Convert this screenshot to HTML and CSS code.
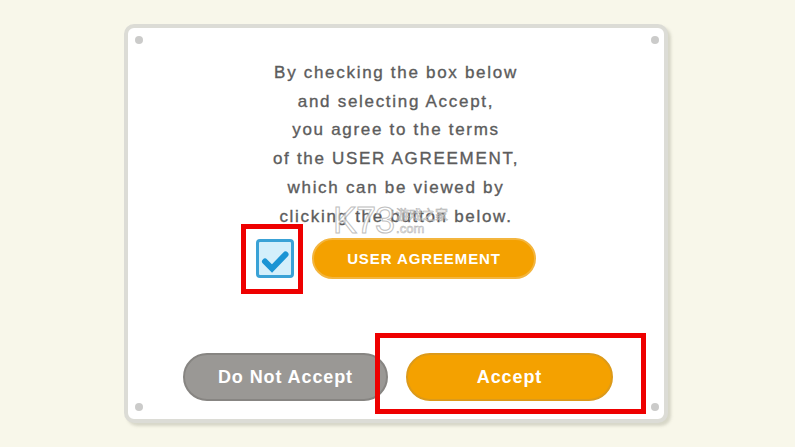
FILE: index.html
```html
<!DOCTYPE html>
<html lang="en">
<head>
<meta charset="utf-8">
<title>User Agreement</title>
<link rel="stylesheet" href="styles.css">
</head>
<body>
<div class="card">
  <span class="dot dot-tl"></span>
  <span class="dot dot-tr"></span>
  <span class="dot dot-bl"></span>
  <span class="dot dot-br"></span>
  <p class="message">
    By checking the box below<br>
    and selecting Accept,<br>
    you agree to the terms<br>
    of the USER AGREEMENT,<br>
    which can be viewed by<br>
    clicking the button below.
  </p>
  <div class="agree-row">
    <div class="checkbox">
      <svg viewBox="0 0 32 32" width="32" height="32" aria-hidden="true">
        <path d="M6 17.5 L13 24.5 L26.5 10.5" fill="none" stroke="#1a94d4" stroke-width="6" stroke-linecap="round" stroke-linejoin="miter"/>
      </svg>
    </div>
    <button class="btn btn-orange btn-agreement">USER AGREEMENT</button>
  </div>
  <div class="actions">
    <button class="btn btn-gray btn-big">Do Not Accept</button>
    <button class="btn btn-orange btn-big btn-accept">Accept</button>
  </div>
</div>
<div class="watermark" aria-hidden="true">
  <span class="wm-k">K73</span>
  <span class="wm-side"><span class="wm-cn">游戏之家</span><span class="wm-com">.com</span></span>
</div>
<div class="mark mark-check"></div>
<div class="mark mark-accept"></div>
</body>
</html>
```
FILE: styles.css
```css
* { box-sizing: border-box; }
html, body { margin: 0; height: 100%; }
body {
  background: #f8f7ea;
  font-family: "Liberation Sans", Arial, sans-serif;
  padding: 24px 0 0 124px;
  position: relative;
  overflow: hidden;
}
.card {
  position: relative;
  width: 544px;
  height: 399px;
  background: #ffffff;
  border: 4px solid #dcdcd6;
  border-radius: 10px;
  box-shadow: 3px 3px 3px rgba(120, 120, 100, 0.25);
  display: flex;
  flex-direction: column;
  align-items: center;
  padding: 31px 0 18px;
}
.dot {
  position: absolute;
  width: 8px;
  height: 8px;
  border-radius: 50%;
  background: #cbcbca;
}
.dot-tl { left: 7px; top: 8px; }
.dot-tr { right: 5px; top: 8px; }
.dot-bl { left: 7px; bottom: 8px; }
.dot-br { right: 5px; bottom: 8px; }

.message {
  margin: 0;
  text-align: center;
  color: #5c5c5c;
  font-size: 17px;
  line-height: 28.7px;
  letter-spacing: 1.7px;
  -webkit-text-stroke: 0.35px #5c5c5c;
}
.agree-row {
  display: flex;
  align-items: center;
  gap: 18px;
  margin-top: 7px;
}
.checkbox {
  width: 38px;
  height: 39px;
  border: 3px solid #3aa2d6;
  border-radius: 4px;
  background: #d4effb;
  display: flex;
  align-items: center;
  justify-content: center;
  padding-top: 3px;
}
.btn {
  font-family: "Liberation Sans", Arial, sans-serif;
  font-weight: bold;
  color: #ffffff;
  border-radius: 999px;
  display: flex;
  align-items: center;
  justify-content: center;
  padding: 0;
}
.btn-orange {
  background: #f4a100;
  border: 2px solid #f3b53e;
}
.btn-gray {
  background: #9a9895;
  border: 2px solid #878582;
}
.btn-agreement {
  width: 224px;
  height: 41px;
  font-size: 15px;
  letter-spacing: 0.9px;
}
.actions {
  margin-top: auto;
  display: flex;
  gap: 18px;
  padding-left: 4px;
}
.btn-big {
  width: 205px;
  height: 48px;
  font-size: 18px;
  letter-spacing: 0.9px;
}
.btn-accept {
  width: 207px;
  border-color: #dc9a1a;
}

.watermark {
  position: absolute;
  left: 333px;
  top: 204px;
  display: flex;
  align-items: flex-start;
  opacity: 0.85;
  pointer-events: none;
}
.wm-k {
  font-family: "Liberation Sans", Arial, sans-serif;
  font-size: 36px;
  line-height: 34px;
  letter-spacing: -1px;
  color: rgba(255, 255, 255, 0.9);
  -webkit-text-stroke: 1px #b4b4b4;
}
.wm-side {
  display: flex;
  flex-direction: column;
  margin-left: 2px;
  margin-top: 2px;
}
.wm-cn {
  font-family: "Noto Sans CJK SC", sans-serif;
  font-size: 13px;
  line-height: 16px;
  color: rgba(255, 255, 255, 0.8);
  -webkit-text-stroke: 0.6px #a8a8a8;
}
.wm-com {
  font-family: "Liberation Sans", Arial, sans-serif;
  font-size: 13px;
  line-height: 13px;
  color: #ffffff;
  -webkit-text-stroke: 0.6px #a8a8a8;
}

.mark {
  position: absolute;
  border: 5px solid #ee0000;
}
.mark-check {
  left: 241px;
  top: 224px;
  width: 62px;
  height: 70px;
}
.mark-accept {
  left: 375px;
  top: 333px;
  width: 271px;
  height: 81px;
}
```
